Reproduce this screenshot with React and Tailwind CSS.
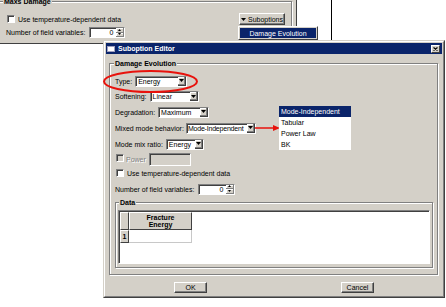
import React from 'react';

function Checkbox({ disabled }) {
  return (
    <span
      className={`inline-block shrink-0 w-[8px] h-[8px] border border-t-[#808080] border-l-[#808080] border-b-white border-r-white shadow-[inset_1px_1px_0_#404040] ${
        disabled ? 'bg-[#d4d0c8]' : 'bg-white'
      }`}
    />
  );
}

function DownArrow() {
  return (
    <svg width="5" height="3" viewBox="0 0 5 3" className="block">
      <polygon points="0,0 5,0 2.5,3" fill="#000" />
    </svg>
  );
}

function Select({ className, value, tight }) {
  return (
    <div
      className={`flex h-[11px] shrink-0 border border-t-[#808080] border-l-[#808080] border-b-white border-r-white bg-white shadow-[inset_1px_1px_0_#404040] ${className}`}
    >
      <span
        className={`flex-1 min-w-0 pt-[1px] leading-[8px] overflow-hidden whitespace-nowrap ${
          tight ? 'pl-[1px] tracking-[-0.2px]' : 'pl-[2px]'
        }`}
      >
        {value}
      </span>
      <span className="flex items-center justify-center shrink-0 w-[8px] h-full bg-[#d4d0c8] border-r border-b border-[#404040] shadow-[inset_-1px_-1px_0_#808080,inset_1px_1px_0_#fff]">
        <DownArrow />
      </span>
    </div>
  );
}

function Spin({ className }) {
  return (
    <div
      className={`flex h-[11px] shrink-0 border border-t-[#808080] border-l-[#808080] border-b-white border-r-white bg-white shadow-[inset_1px_1px_0_#404040] ${className}`}
    >
      <span className="flex-1 pr-[3px] pt-[1px] leading-[8px] text-right">0</span>
      <span className="flex flex-col w-[8px] h-full">
        <span className="flex-1 flex items-center justify-center bg-[#d4d0c8] border-r border-b border-[#808080] shadow-[inset_1px_1px_0_#fff]">
          <svg width="3" height="2" viewBox="0 0 3 2" className="block">
            <polygon points="0,2 3,2 1.5,0" fill="#000" />
          </svg>
        </span>
        <span className="flex-1 flex items-center justify-center bg-[#d4d0c8] border-r border-b border-[#808080] shadow-[inset_1px_1px_0_#fff]">
          <svg width="3" height="2" viewBox="0 0 3 2" className="block">
            <polygon points="0,0 3,0 1.5,2" fill="#000" />
          </svg>
        </span>
      </span>
    </div>
  );
}

function Button({ children, className }) {
  return (
    <div
      className={`flex items-center justify-center h-[11px] bg-[#d4d0c8] border border-t-white border-l-white border-b-[#404040] border-r-[#404040] shadow-[inset_-1px_-1px_0_#808080] ${className}`}
    >
      {children}
    </div>
  );
}

export default function App() {
  return (
    <div className="relative w-[446px] h-[307px] overflow-hidden bg-white font-['Liberation_Sans',Arial,sans-serif] text-[7px] leading-[9px] text-black">
      {/* background window */}
      <div className="absolute left-0 top-0 w-[297px] h-[44px] bg-[#d4d0c8] border-r border-b border-[#404040] overflow-hidden">
        <div className="mt-[1px] -ml-[3px] mr-[4px] h-[60px] border border-[#808080] shadow-[inset_1px_1px_0_#fff,1px_1px_0_#fff]">
          <div className="-mt-[5px] ml-[5px] w-fit px-[1px] bg-[#d4d0c8] font-bold h-[9px] whitespace-nowrap">
            Maxs Damage
          </div>
          <div className="mt-[7px] flex items-center justify-between h-[12px] pl-[9px] pr-[6px]">
            <div className="flex items-center gap-[3px]">
              <Checkbox />
              <span className="whitespace-nowrap">Use temperature-dependent data</span>
            </div>
            <Button className="w-[46px] h-[12px] gap-[2px]">
              <DownArrow />
              <span>Suboptions</span>
            </Button>
          </div>
          <div className="mt-[2px] flex items-center h-[11px] pl-[8px]">
            <span className="whitespace-nowrap">Number of field variables:</span>
            <Spin className="ml-[4px] w-[36px]" />
          </div>
        </div>
      </div>

      {/* other window edge */}
      <div className="absolute left-[331px] top-0 w-[1px] h-[60px] bg-black" />

      {/* suboptions menu */}
      <div className="absolute left-[238px] top-[26px] w-[80px] h-[14px] bg-[#d4d0c8] border border-t-white border-l-white border-b-[#404040] border-r-[#404040] p-[1px]">
        <div className="h-full bg-[#0a246a] text-white flex items-center justify-center">Damage Evolution</div>
      </div>

      {/* dialog */}
      <div className="absolute left-[103px] top-[40px] w-[342px] h-[258px] bg-[#d4d0c8] border border-t-[#d4d0c8] border-l-[#d4d0c8] border-r-[#404040] border-b-[#404040]">
        <div className="h-full border border-t-white border-l-white border-r-[#808080] border-b-[#808080] p-[1px] flex flex-col">
          {/* title bar */}
          <div className="flex items-center h-[11px] bg-[#0a246a] pl-[1px] pr-[2px] shrink-0">
            <span className="w-[8px] h-[6px] bg-white border border-[#a0a0c0]" />
            <span className="ml-[3px] text-white font-bold">Suboption Editor</span>
            <span className="ml-auto flex items-center justify-center w-[9px] h-[8px] bg-[#d4d0c8] border border-t-white border-l-white border-b-[#404040] border-r-[#404040]">
              <svg width="5" height="4" viewBox="0 0 5 4" className="block">
                <path d="M0.5 0.5 L4.5 3.5 M4.5 0.5 L0.5 3.5" stroke="#000" strokeWidth="1.2" />
              </svg>
            </span>
          </div>

          {/* Damage Evolution group */}
          <div className="mt-[9px] ml-[3px] mr-[4px] h-[212px] shrink-0 border border-[#808080] shadow-[inset_1px_1px_0_#fff,1px_1px_0_#fff]">
            <div className="-mt-[5px] ml-[4px] w-fit px-[1px] bg-[#d4d0c8] font-bold h-[9px] whitespace-nowrap">
              Damage Evolution
            </div>
            <div className="mt-[5px] pl-[5px] pr-[4px] flex flex-col">
              <div className="flex items-center h-[16px]">
                <span>Type:</span>
                <Select className="ml-[3px] w-[52px]" value="Energy" />
              </div>
              <div className="flex items-center h-[15px]">
                <span>Softening:</span>
                <Select className="ml-[3px] w-[49px]" value="Linear" />
              </div>
              <div className="flex items-center h-[16px]">
                <span>Degradation:</span>
                <Select className="ml-[3px] w-[51px]" value="Maximum" />
              </div>
              <div className="flex items-center h-[16px]">
                <span className="whitespace-nowrap">Mixed mode behavior:</span>
                <Select className="ml-[2px] w-[70px]" value="Mode-Independent" tight />
              </div>
              <div className="flex items-center h-[16px]">
                <span className="whitespace-nowrap">Mode mix ratio:</span>
                <Select className="ml-[3px] w-[38px]" value="Energy" />
              </div>
              <div className="flex items-center h-[14px]">
                <span className="ml-[1px]">
                  <Checkbox disabled />
                </span>
                <span className="ml-[2px] text-[#808080] [text-shadow:1px_1px_0_#fff]">Power</span>
                <span className="ml-[3px] w-[42px] h-[13px] bg-[#d4d0c8] border border-t-[#808080] border-l-[#808080] border-b-white border-r-white shadow-[inset_1px_1px_0_#404040]" />
              </div>
              <div className="flex items-center h-[15px]">
                <span className="ml-[1px]">
                  <Checkbox />
                </span>
                <span className="ml-[3px] whitespace-nowrap">Use temperature-dependent data</span>
              </div>
              <div className="flex items-center h-[16px]">
                <span className="whitespace-nowrap">Number of field variables:</span>
                <Spin className="ml-[4px] w-[37px]" />
              </div>

              {/* Data group */}
              <div className="mt-[5px] h-[66px] border border-[#808080] shadow-[inset_1px_1px_0_#fff,1px_1px_0_#fff]">
                <div className="-mt-[5px] ml-[3px] w-fit px-[1px] bg-[#d4d0c8] font-bold h-[9px]">Data</div>
                <div className="mt-[3px] ml-[2px] mr-[2px] h-[54px] bg-white border border-t-[#808080] border-l-[#808080] border-b-white border-r-white shadow-[inset_1px_1px_0_#404040] p-[1px]">
                  <div className="flex h-[18px]">
                    <div className="w-[9px] h-full bg-[#d4d0c8] border border-t-white border-l-white border-b-[#404040] border-r-[#404040]" />
                    <div className="w-[63px] h-full bg-[#d4d0c8] border border-t-white border-l-white border-b-[#404040] border-r-[#404040] flex flex-col items-center justify-center font-bold leading-[7px]">
                      <span>Fracture</span>
                      <span>Energy</span>
                    </div>
                  </div>
                  <div className="flex h-[13px]">
                    <div className="w-[9px] h-full bg-[#d4d0c8] border border-t-white border-l-white border-b-[#404040] border-r-[#404040] flex items-center justify-center font-bold">
                      1
                    </div>
                    <div className="w-[63px] h-full bg-white border-r border-b border-[#c8c8c8]" />
                  </div>
                </div>
              </div>
            </div>
          </div>

          {/* buttons */}
          <div className="mt-[7px] flex h-[11px] pl-[68px] gap-[134px] shrink-0">
            <Button className="w-[33px]">OK</Button>
            <Button className="w-[33px]">Cancel</Button>
          </div>
        </div>
      </div>

      {/* red ellipse annotation */}
      <svg className="absolute left-[102px] top-[69px]" width="97" height="25" viewBox="0 0 97 25">
        <ellipse cx="48.5" cy="12.5" rx="46.5" ry="10.5" fill="none" stroke="#e8120c" strokeWidth="2" />
      </svg>

      {/* red arrow annotation */}
      <svg className="absolute left-[255px] top-[124px]" width="26" height="8" viewBox="0 0 26 8">
        <line x1="0" y1="4" x2="20" y2="4" stroke="#e8120c" strokeWidth="1.5" />
        <polygon points="18,1 25,4 18,7" fill="#e8120c" />
      </svg>

      {/* dropdown list */}
      <div className="absolute left-[279px] top-[106px] w-[72px] h-[44px] bg-white flex flex-col">
        <div className="h-[11px] bg-[#0a246a] text-white pl-[2px] flex items-center">Mode-Independent</div>
        <div className="h-[11px] pl-[2px] flex items-center">Tabular</div>
        <div className="h-[11px] pl-[2px] flex items-center">Power Law</div>
        <div className="h-[11px] pl-[2px] flex items-center">BK</div>
      </div>
    </div>
  );
}
